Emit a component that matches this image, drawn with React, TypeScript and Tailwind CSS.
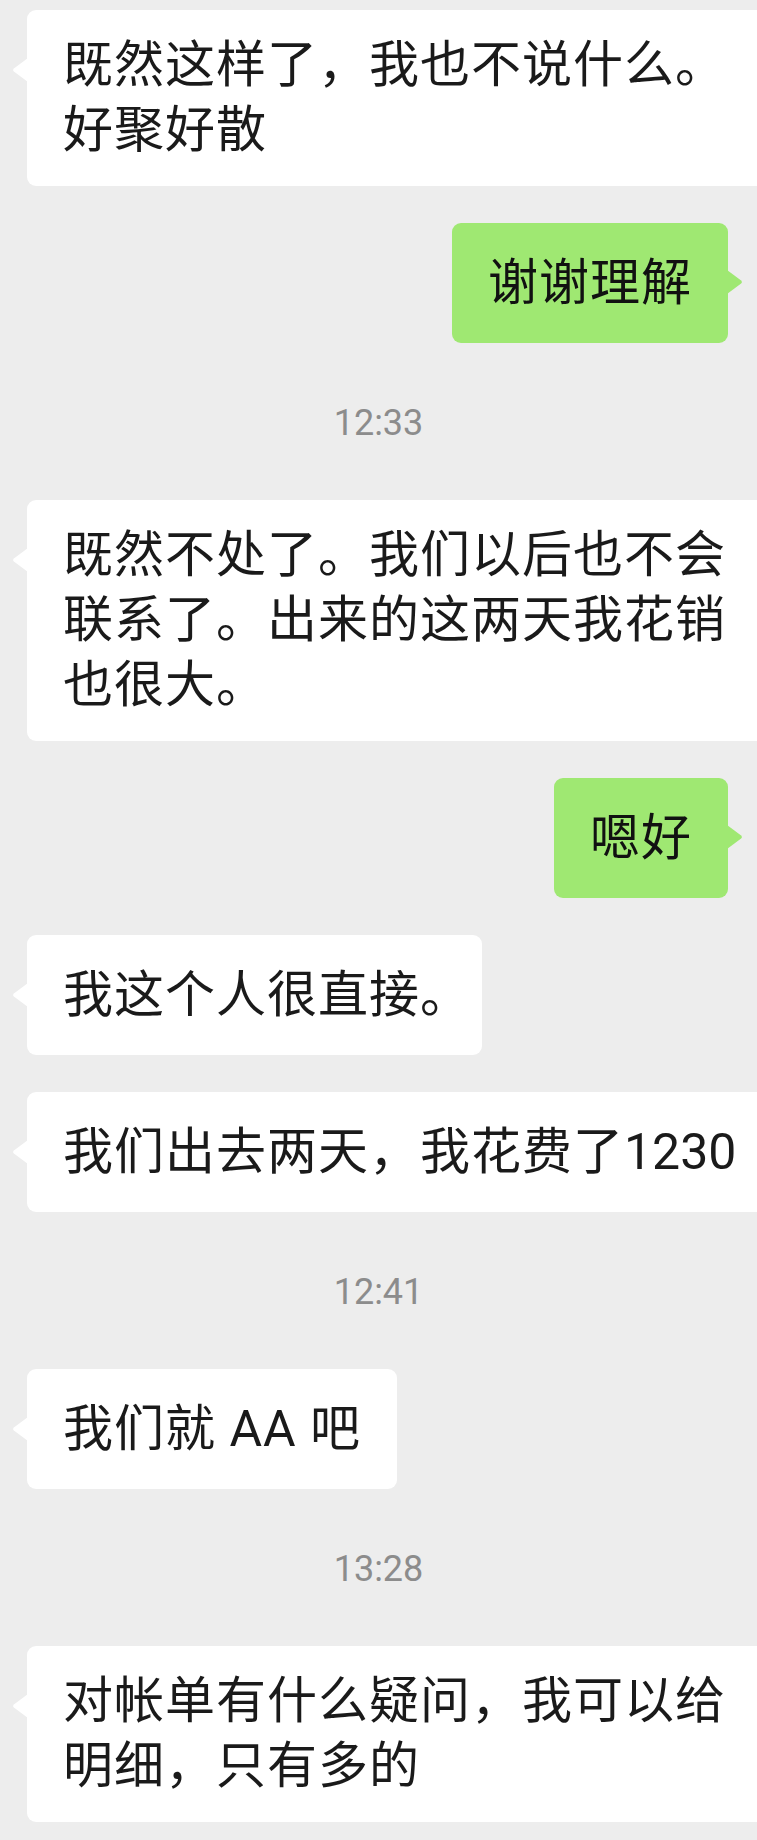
import type { ReactNode } from "react";

type Msg =
  | { kind: "in"; body: ReactNode }
  | { kind: "out"; body: ReactNode }
  | { kind: "time"; body: string };

const End = () => <span className="[font-feature-settings:'halt']">。</span>;

const messages: Msg[] = [
  { kind: "in", body: "既然这样了，我也不说什么。好聚好散" },
  { kind: "out", body: "谢谢理解" },
  { kind: "time", body: "12:33" },
  { kind: "in", body: "既然不处了。我们以后也不会联系了。出来的这两天我花销也很大。" },
  { kind: "out", body: "嗯好" },
  { kind: "in", body: <>我这个人很直接<End /></> },
  { kind: "in", body: <>我们出去两天，我花费了<span className="tracking-normal">1230</span></> },
  { kind: "time", body: "12:41" },
  { kind: "in", body: "我们就 AA 吧" },
  { kind: "time", body: "13:28" },
  { kind: "in", body: "对帐单有什么疑问，我可以给明细，只有多的" },
];

function Incoming({ children }: { children: ReactNode }) {
  return (
    <div className="flex pl-[27px]">
      <div className="relative flex min-h-[120px] max-w-[762px] shrink-0 items-center rounded-[9px] bg-white px-[36px] py-[23px]">
        <svg className="absolute -left-[15px] top-[48px]" width="16" height="24" viewBox="0 0 16 24">
          <path d="M16 0 L2.2 10.2 Q0 12 2.2 13.8 L16 24 Z" fill="#ffffff" />
        </svg>
        <p className="text-[50px] leading-[65px] tracking-[1px] text-[#1a1a1a]">{children}</p>
      </div>
    </div>
  );
}

function Outgoing({ children }: { children: ReactNode }) {
  return (
    <div className="flex justify-end pr-[29px]">
      <div className="relative flex min-h-[120px] shrink-0 items-center rounded-[9px] bg-[#9fe872] px-[36px] py-[23px]">
        <svg className="absolute -right-[15px] top-[47px]" width="16" height="24" viewBox="0 0 16 24">
          <path d="M0 0 L13.8 10.2 Q16 12 13.8 13.8 L0 24 Z" fill="#9fe872" />
        </svg>
        <p className="text-[50px] leading-[65px] tracking-[1px] text-[#111111]">{children}</p>
      </div>
    </div>
  );
}

export default function App() {
  return (
    <div className="h-[1840px] w-full overflow-hidden bg-[#ededed] pt-[10px] font-['Roboto','Noto_Sans_CJK_SC',sans-serif]">
      <div className="flex flex-col gap-[37px]">
        {messages.map((m, i) => {
          if (m.kind === "time") {
            return (
              <div key={i} className="pt-[23px] pb-[20px] text-center text-[36px] leading-[40px] text-[#8c8c8c]">
                {m.body}
              </div>
            );
          }
          if (m.kind === "out") return <Outgoing key={i}>{m.body}</Outgoing>;
          return <Incoming key={i}>{m.body}</Incoming>;
        })}
      </div>
    </div>
  );
}
